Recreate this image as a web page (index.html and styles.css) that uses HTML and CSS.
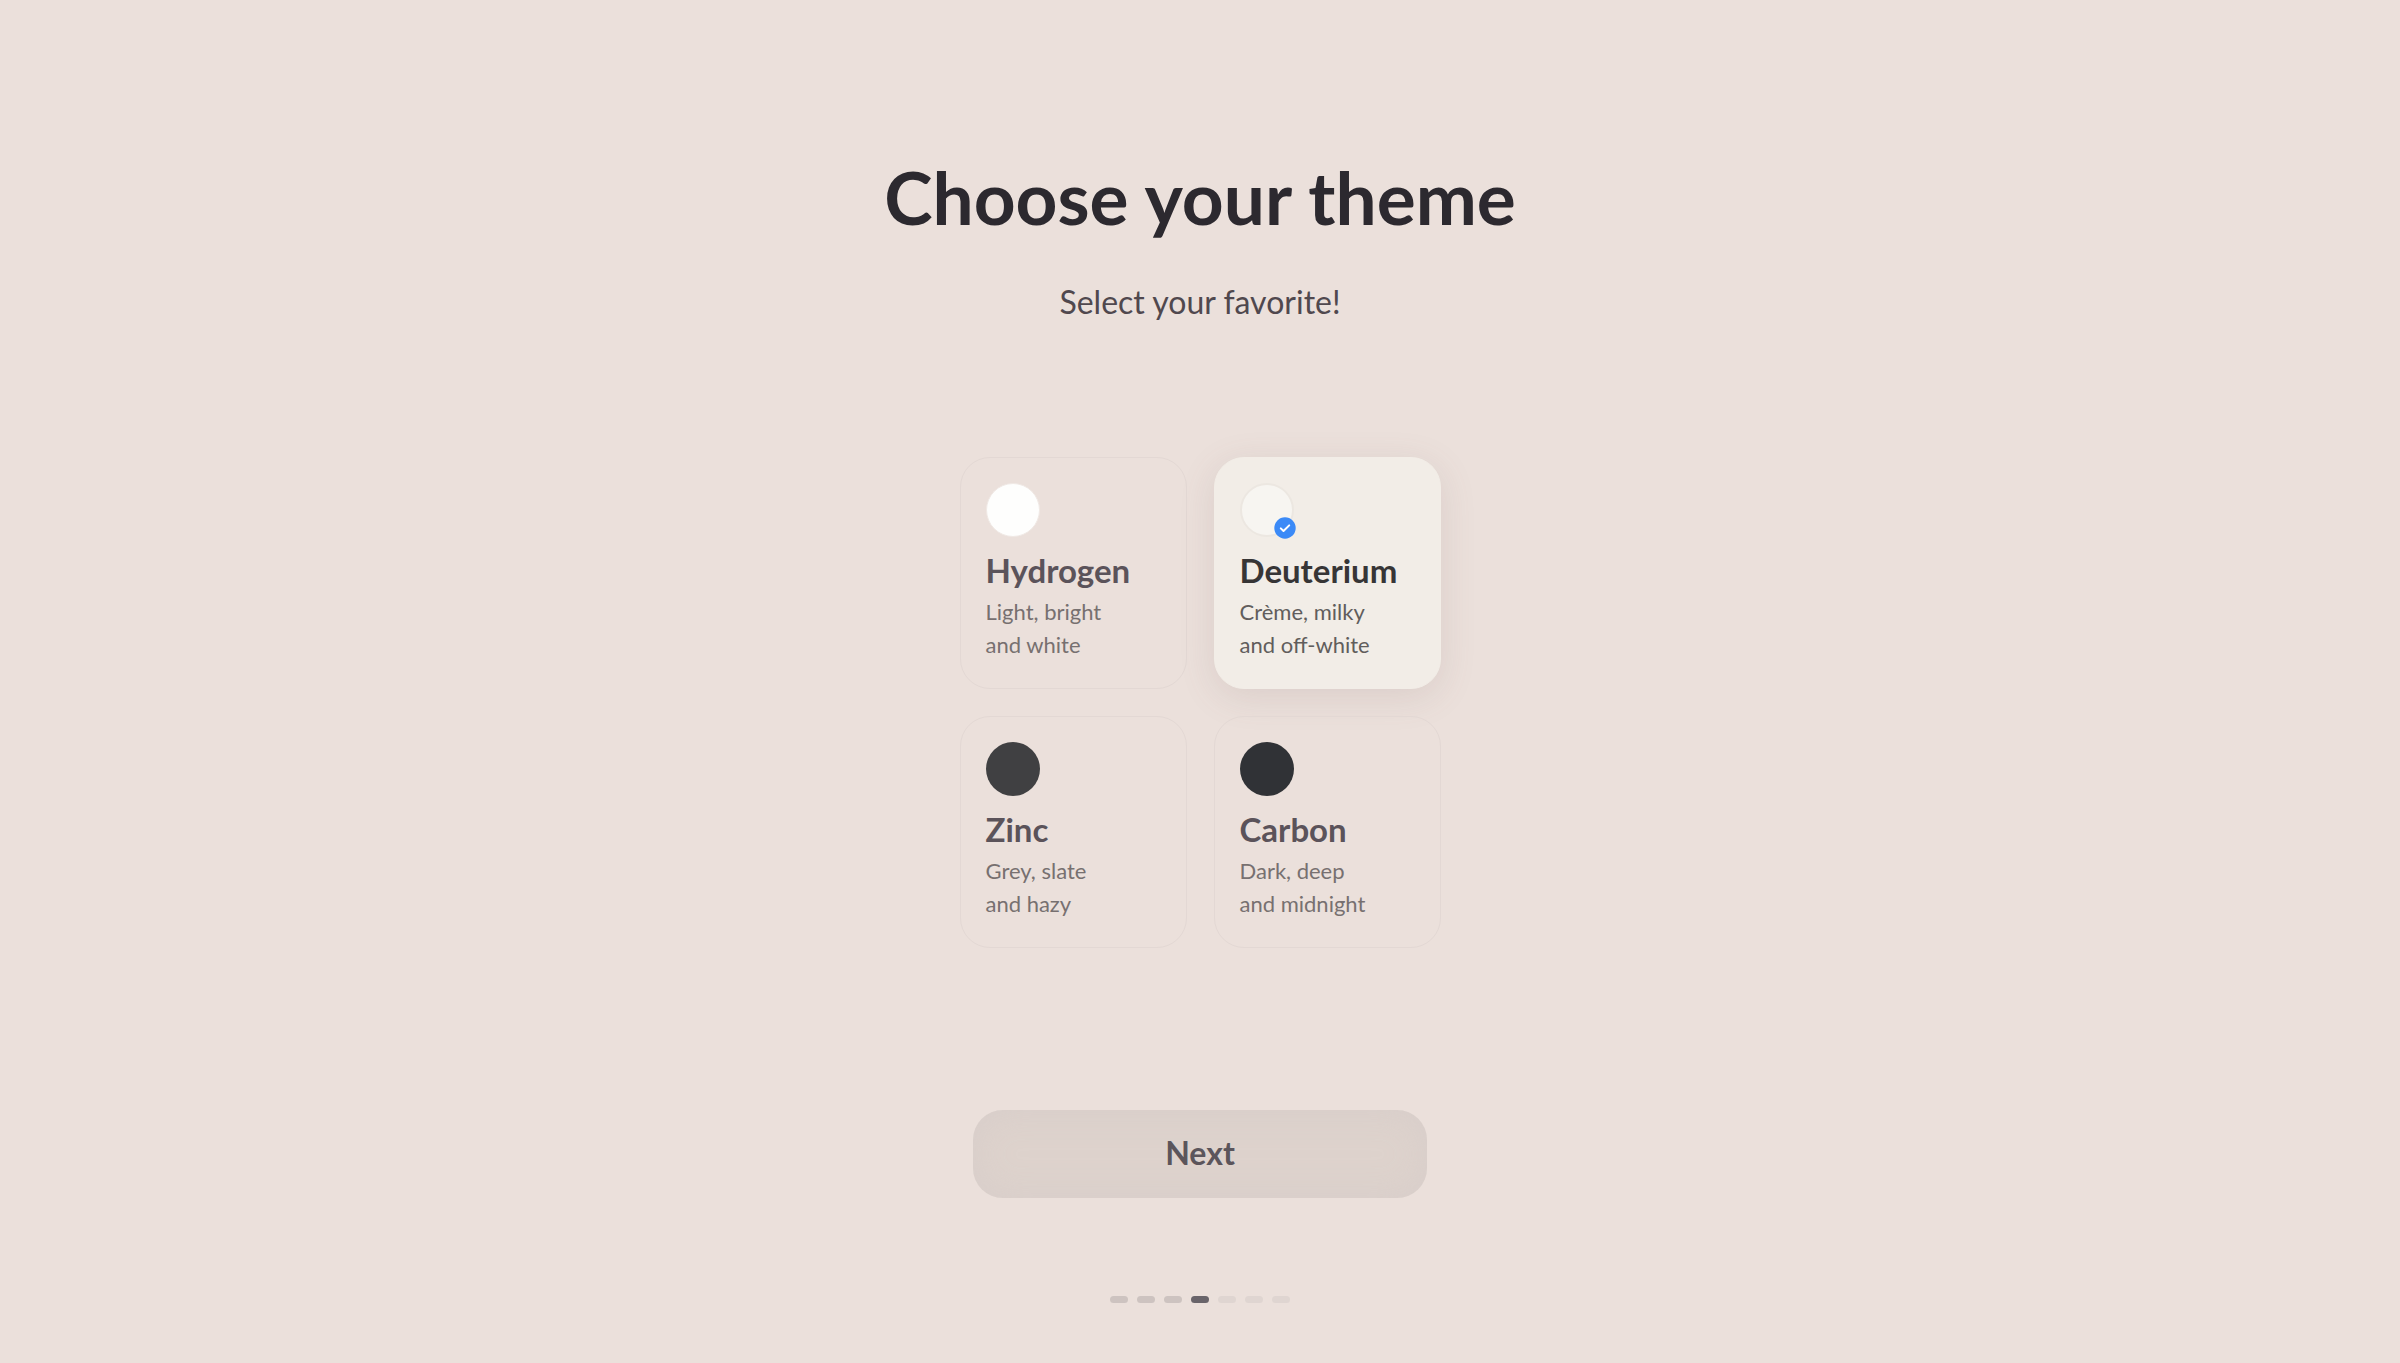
FILE: index.html
```
<!DOCTYPE html>
<html lang="en">
<head>
    <meta charset="UTF-8">
    <meta name="viewport" content="width=device-width, initial-scale=1.0">
    <link rel="stylesheet" href="styles.css">
    <title>Choose your theme</title>
</head>
<body>
    <main class="container">
        <h1>Choose your theme</h1>
        <p class="subtitle">Select your favorite!</p>

        <form class="theme-form">
            <div class="themes">
                <label class="theme" for="hydrogen">
                    <input type="radio" name="theme" id="hydrogen" value="hydrogen">
                    <span class="swatch swatch-hydrogen"></span>
                    <span class="theme-name">Hydrogen</span>
                    <span class="theme-text">Light, bright<br>and white</span>
                </label>

                <label class="theme" for="deuterium">
                    <input type="radio" name="theme" id="deuterium" value="deuterium" checked>
                    <span class="swatch swatch-deuterium">
                        <svg class="check" viewBox="0 0 22 22" aria-hidden="true">
                            <circle cx="11" cy="11" r="10.7" fill="#3b8af7"/>
                            <path d="M6.8 11.4 L9.5 14 L15.2 8.4" fill="none" stroke="#fff" stroke-width="2" stroke-linecap="round" stroke-linejoin="round"/>
                        </svg>
                    </span>
                    <span class="theme-name">Deuterium</span>
                    <span class="theme-text">Crème, milky<br>and off-white</span>
                </label>

                <label class="theme" for="zinc">
                    <input type="radio" name="theme" id="zinc" value="zinc">
                    <span class="swatch swatch-zinc"></span>
                    <span class="theme-name">Zinc</span>
                    <span class="theme-text">Grey, slate<br>and hazy</span>
                </label>

                <label class="theme" for="carbon">
                    <input type="radio" name="theme" id="carbon" value="carbon">
                    <span class="swatch swatch-carbon"></span>
                    <span class="theme-name">Carbon</span>
                    <span class="theme-text">Dark, deep<br>and midnight</span>
                </label>
            </div>

            <button type="button" class="next">Next</button>
        </form>

        <div class="steps">
            <span class="step done"></span>
            <span class="step done"></span>
            <span class="step done"></span>
            <span class="step current"></span>
            <span class="step"></span>
            <span class="step"></span>
            <span class="step"></span>
        </div>
    </main>
</body>
</html>
```
FILE: styles.css
```
* {
    box-sizing: border-box;
}

body {
    font-family: Lato, sans-serif;
    margin: 0;
    background-color: #ebe0db;
    color: #2c292f;
}

.container {
    display: flex;
    flex-direction: column;
    align-items: center;
    min-height: 100vh;
    padding: 152px 24px 40px;
}

h1 {
    margin: 0;
    font-size: 73px;
    line-height: 90px;
    font-weight: bold;
    text-align: center;
}

.subtitle {
    margin: 40px 0 0;
    font-size: 32px;
    line-height: 40px;
    color: #50484e;
}

.theme-form {
    display: flex;
    flex-direction: column;
    align-items: center;
    margin-top: 135px;
}

.themes {
    display: grid;
    grid-template-columns: repeat(2, minmax(0, 227px));
    gap: 27px;
}

.theme {
    position: relative;
    display: flex;
    flex-direction: column;
    padding: 25px 25px 27px;
    border: 1px solid #e3d8d4;
    border-radius: 30px;
    cursor: pointer;
}

.theme input {
    position: absolute;
    opacity: 0;
}

.swatch {
    position: relative;
    width: 54px;
    height: 54px;
    border-radius: 50%;
}

.swatch-hydrogen {
    background-color: #fefefd;
    border: 1px solid #f0e9e5;
}

.swatch-deuterium {
    background-color: #f7f5f1;
    border: 2px solid #ece7e1;
}

.swatch-zinc {
    background-color: #404042;
}

.swatch-carbon {
    background-color: #303236;
}

.check {
    position: absolute;
    right: -4px;
    bottom: -4px;
    width: 22px;
    height: 22px;
}

.theme-name {
    margin-top: 13px;
    font-size: 33px;
    line-height: 40px;
    font-weight: bold;
    color: #5b535a;
}

.theme-text {
    margin-top: 5px;
    font-size: 22px;
    line-height: 33px;
    color: #777070;
    white-space: nowrap;
}

.theme:has(input:checked) {
    background-color: #f2ede7;
    border-color: #f2ede7;
    box-shadow: 0 8px 36px rgba(120, 90, 90, 0.14);
}

.theme:has(input:checked) .theme-name {
    color: #373536;
}

.theme:has(input:checked) .theme-text {
    color: #615d5c;
}

.next {
    width: 454px;
    max-width: 100%;
    height: 88px;
    margin-top: 162px;
    padding: 0 0 4px;
    border: none;
    border-radius: 30px;
    background-color: #ded3cd;
    box-shadow: inset 0 0 36px rgba(210, 200, 200, 0.5);
    font-family: inherit;
    font-size: 32px;
    font-weight: bold;
    color: #5b555b;
    cursor: pointer;
}

.steps {
    display: flex;
    gap: 9px;
    margin-top: 98px;
}

.step {
    width: 18px;
    height: 7px;
    border-radius: 4px;
    background-color: #dfd5d1;
}

.step.done {
    background-color: #cdc3c0;
}

.step.current {
    background-color: #69646a;
}
```
